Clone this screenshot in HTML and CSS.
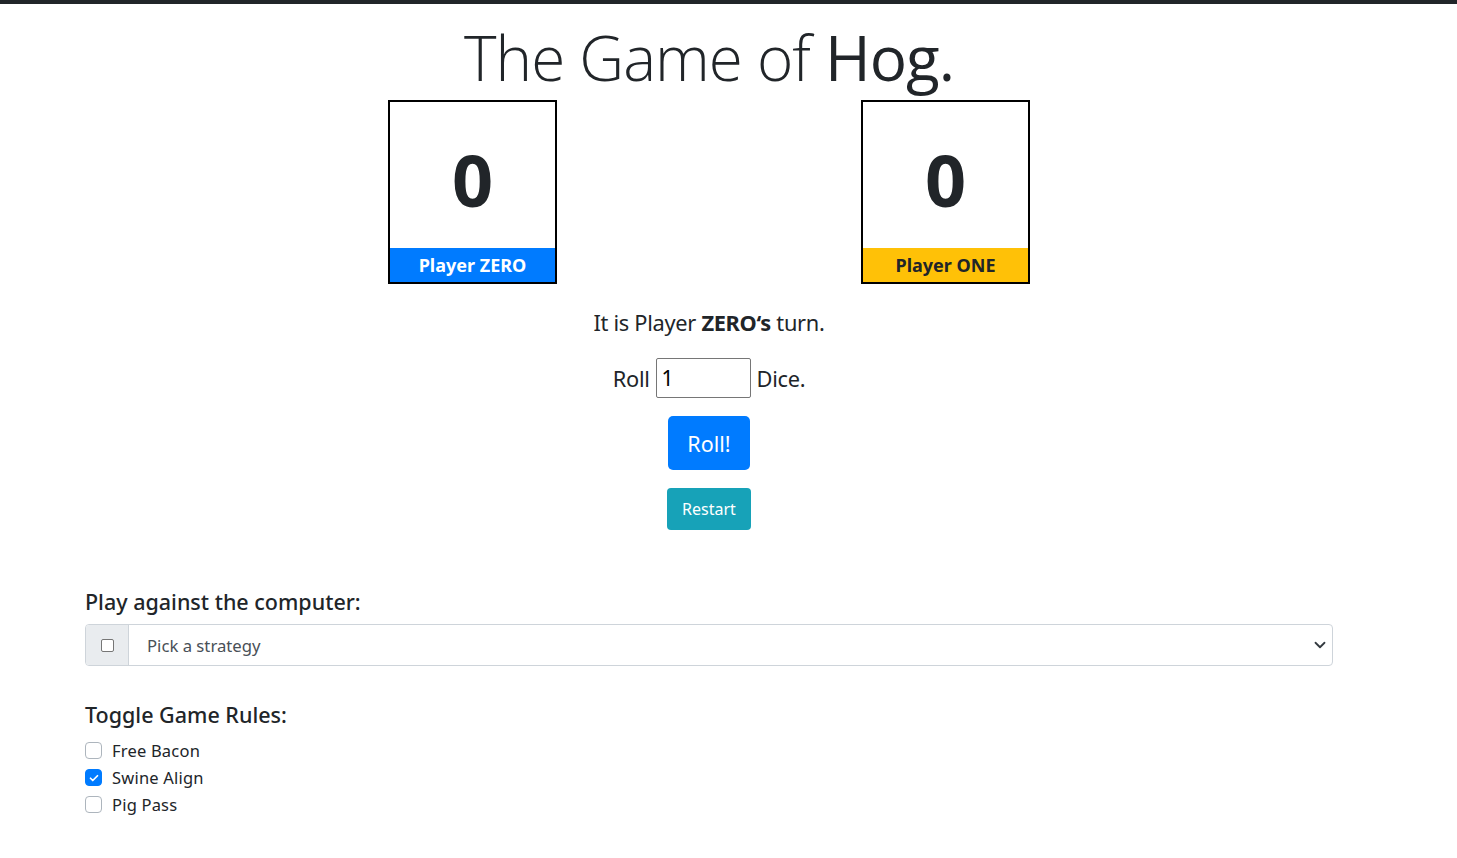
FILE: index.html
```html
<!DOCTYPE html>
<html>
<head>
<meta charset="utf-8">
<link rel="stylesheet" href="styles.css">
</head>
<body>
<div class="topbar"></div>
<main class="page">
  <h1 class="title">The Game of <b>Hog.</b></h1>
  <div class="scores">
    <div class="score-card">
      <div class="score-num">0</div>
      <div class="score-label zero">Player ZERO</div>
    </div>
    <div class="score-card">
      <div class="score-num">0</div>
      <div class="score-label one">Player ONE</div>
    </div>
  </div>
  <p class="turn">It is Player <b>ZERO‘s</b> turn.</p>
  <div class="roll-row">
    <span>Roll</span>
    <input class="dice-input" type="text" value="1">
    <span>Dice.</span>
  </div>
  <div class="btn-row"><button class="btn btn-roll">Roll!</button></div>
  <div class="btn-row"><button class="btn btn-restart">Restart</button></div>

  <section class="options">
    <h5 class="section-title">Play against the computer:</h5>
    <div class="input-group">
      <div class="prepend"><span class="mini-check"></span></div>
      <div class="select">
        <span>Pick a strategy</span>
        <svg class="caret" width="12" height="12" viewBox="0 0 16 16"><path d="M2 5l6 6 6-6" fill="none" stroke="#343a40" stroke-width="2.4" stroke-linecap="round" stroke-linejoin="round"/></svg>
      </div>
    </div>

    <h5 class="section-title rules-title">Toggle Game Rules:</h5>
    <ul class="rules">
      <li><span class="box"></span>Free Bacon</li>
      <li><span class="box checked"><svg width="10" height="10" viewBox="0 0 8 8"><path d="M1.2 4.2l1.8 1.8 3.8-3.8" fill="none" stroke="#fff" stroke-width="1.4" stroke-linecap="round" stroke-linejoin="round"/></svg></span>Swine Align</li>
      <li><span class="box"></span>Pig Pass</li>
    </ul>
  </section>
</main>
</body>
</html>
```
FILE: styles.css
```css
* { box-sizing: border-box; }
html, body { margin: 0; padding: 0; background: #fff; }
body {
  font-family: "Noto Sans", "Open Sans", sans-serif;
  color: #212529;
  font-size: 16px;
}
.topbar { height: 4px; background: #212529; }
.page {
  display: flex;
  flex-direction: column;
  align-items: center;
  margin: 0 124px 0 85px;
}
.title {
  margin: 15px 0 0 0;
  font-family: "Open Sans", sans-serif;
  font-weight: 300;
  font-size: 62px;
  line-height: 76px;
  letter-spacing: -1px;
  color: #212529;
}
.title b { font-weight: 400; }
.scores {
  display: flex;
  gap: 304px;
  margin-top: 5px;
}
.score-card {
  width: 169px;
  height: 184px;
  border: 2px solid #000;
  display: flex;
  flex-direction: column;
}
.score-num {
  flex: 1;
  display: flex;
  align-items: center;
  justify-content: center;
  font-weight: 700;
  font-size: 72px;
  padding-top: 8px;
}
.score-label {
  height: 34px;
  display: flex;
  align-items: center;
  justify-content: center;
  font-weight: 700;
  font-size: 18px;
}
.score-label.zero { background: #007bff; color: #fff; }
.score-label.one { background: #ffc107; color: #212529; }
.turn {
  margin: 24px 0 0 0;
  font-size: 21.8px;
  line-height: 30px;
  letter-spacing: -0.3px;
}
.roll-row {
  display: flex;
  align-items: center;
  gap: 6px;
  margin-top: 20px;
  font-size: 21.8px;
  letter-spacing: -0.3px;
}
.dice-input {
  width: 95px;
  height: 40px;
  border: 1px solid #767676;
  border-radius: 2px;
  font: inherit;
  font-size: 21px;
  padding: 0 5px;
  color: #000;
}
.btn-row { margin-top: 18px; }
.btn {
  border: none;
  color: #fff;
  font-family: inherit;
  cursor: pointer;
}
.btn-roll {
  background: #007bff;
  width: 82px;
  height: 54px;
  border-radius: 5px;
  font-size: 21.5px;
}
.btn-restart {
  background: #17a2b8;
  width: 84px;
  height: 42px;
  border-radius: 4px;
  font-size: 16px;
}
.options {
  align-self: stretch;
  margin-top: 59px;
}
.section-title {
  margin: 0 0 9px 0;
  font-size: 21.5px;
  font-weight: 500;
  line-height: 26px;
}
.input-group {
  display: flex;
  height: 42px;
  border: 1px solid #ced4da;
  border-radius: 4px;
  overflow: hidden;
}
.prepend {
  width: 43px;
  background: #e9ecef;
  border-right: 1px solid #ced4da;
  display: flex;
  align-items: center;
  justify-content: center;
}
.mini-check {
  width: 13px;
  height: 13px;
  border: 1px solid #767676;
  border-radius: 2px;
  background: #fff;
}
.select {
  flex: 1;
  display: flex;
  align-items: center;
  justify-content: space-between;
  padding: 0 6px 0 18px;
  color: #495057;
  font-size: 16.7px;
}
.rules-title { margin-top: 36px; margin-bottom: 9px; }
.rules { list-style: none; margin: 0; padding: 0; }
.rules li {
  display: flex;
  align-items: center;
  height: 27px;
  font-size: 16.5px;
  letter-spacing: 0.2px;
  color: #212529;
}
.box {
  width: 17px;
  height: 17px;
  border: 1px solid #adb5bd;
  border-radius: 4px;
  margin-right: 10px;
  display: flex;
  align-items: center;
  justify-content: center;
  background: #fff;
}
.box.checked { background: #007bff; border-color: #007bff; }
```
